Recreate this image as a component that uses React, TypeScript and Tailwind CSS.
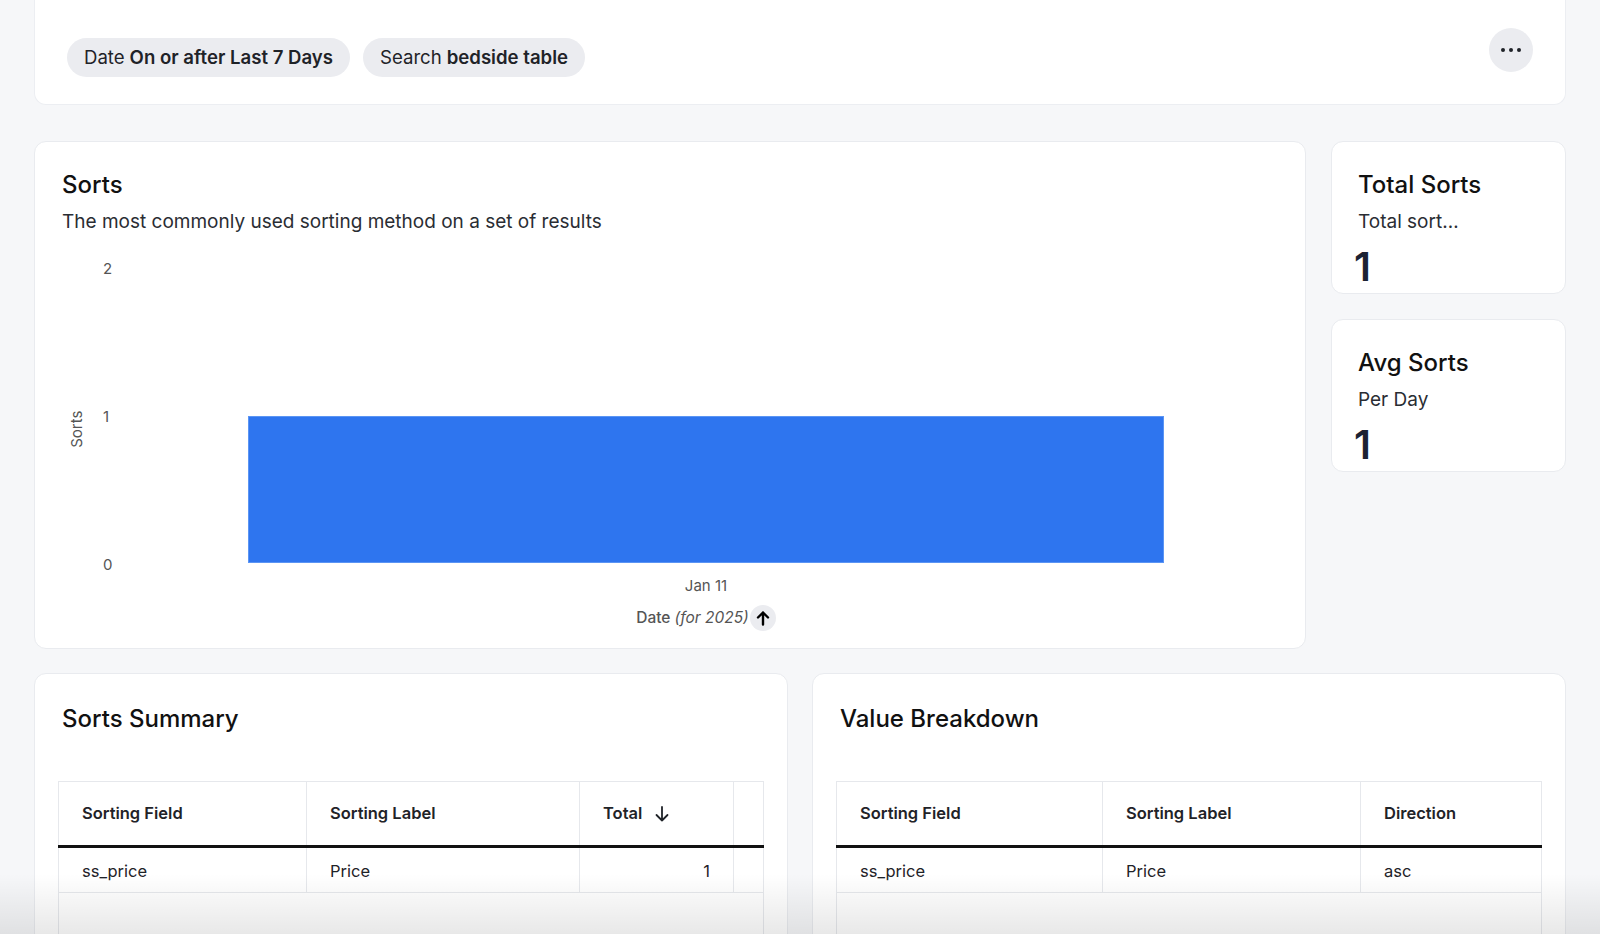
import React from "react";

const font = { fontFamily: "Inter, 'Noto Sans', sans-serif" };

function Chip({ label, value }: { label: string; value: string }) {
  return (
    <div className="flex h-[39px] items-center rounded-full bg-[#ebecf0] px-[17px] text-[18.6px] text-[#1f2328]">
      <span>{label}</span>
      <span className="ml-[5px] font-semibold">{value}</span>
    </div>
  );
}

function StatCard({ title, sub, value }: { title: string; sub: string; value: string }) {
  return (
    <div className="h-[153px] rounded-xl border border-[#e9ebef] bg-white px-[26px] pt-[27px]">
      <div className="text-[24px] font-medium leading-8 text-[#111]">{title}</div>
      <div className="mt-[7px] text-[19px] leading-7 text-[#2a2d33]">{sub}</div>
      <div className="-ml-[4px] mt-[11px] text-[40px] font-semibold leading-[40px] text-[#1b2233]">{value}</div>
    </div>
  );
}

function HeaderCell({ children, w, last }: { children?: React.ReactNode; w: string; last?: boolean }) {
  return (
    <div className={`${w} flex h-full shrink-0 items-center px-[23px] text-[16.5px] font-semibold text-[#1f2328] ${last ? "" : "border-r border-[#e6e8ec]"}`}>
      {children}
    </div>
  );
}

function DataCell({ children, w, right, last }: { children?: React.ReactNode; w: string; right?: boolean; last?: boolean }) {
  return (
    <div className={`${w} flex h-full shrink-0 items-center px-[23px] pt-[3px] text-[16.5px] text-[#1f2328] ${right ? "justify-end" : ""} ${last ? "" : "border-r border-[#e6e8ec]"}`}>
      {children}
    </div>
  );
}

function DownArrow() {
  return (
    <svg width="16" height="18" viewBox="0 0 16 18" fill="none" className="ml-[12px]">
      <path d="M8 2v13.5M2.5 10l5.5 5.5 5.5-5.5" stroke="#1f2328" strokeWidth="1.8" strokeLinecap="round" strokeLinejoin="round" />
    </svg>
  );
}

export default function App() {
  return (
    <div style={font} className="relative h-[934px] w-full overflow-hidden bg-[#f6f7f9] px-[34px]">
      {/* Filter bar */}
      <div className="flex h-[105px] items-start justify-between rounded-b-xl border-x border-b border-[#eceef2] bg-white pl-[32px] pr-[32px] pt-[28px]">
        <div className="mt-[10px] flex gap-[13px]">
          <Chip label="Date" value="On or after Last 7 Days" />
          <Chip label="Search" value="bedside table" />
        </div>
        <div className="flex h-[44px] w-[44px] items-center justify-center rounded-full bg-[#ebecf0]">
          <svg width="22" height="6" viewBox="0 0 22 6">
            <circle cx="3" cy="3" r="2" fill="#1f2328" />
            <circle cx="11" cy="3" r="2" fill="#1f2328" />
            <circle cx="19" cy="3" r="2" fill="#1f2328" />
          </svg>
        </div>
      </div>

      {/* Main row */}
      <div className="mt-[36px] flex gap-[25px]">
        <div className="h-[508px] flex-1 rounded-xl border border-[#e9ebef] bg-white px-[27px] pt-[27px]">
          <div className="text-[24px] font-medium leading-8 text-[#111]">Sorts</div>
          <div className="mt-[7px] text-[19px] leading-7 text-[#2a2d33]">The most commonly used sorting method on a set of results</div>

          <div className="mt-[23px] flex">
            <div className="flex h-[316px] w-[32px] items-center justify-center pt-[24px]">
              <span className="-rotate-90 whitespace-nowrap text-[15px] text-[#555]">Sorts</span>
            </div>
            <div className="flex h-[316px] w-[40px] flex-col justify-between pl-[9px] text-[15px] leading-5 text-[#555]">
              <span>2</span>
              <span>1</span>
              <span>0</span>
            </div>
            <div className="flex-1 pt-[10px]">
              <div className="flex h-[294px] items-end px-[10%]">
                <div className="h-1/2 w-full border border-[#5b95f4] bg-[#2e75ef]" />
              </div>
            </div>
          </div>
          <div className="pl-[72px] pt-[1px]">
            <div className="text-center text-[15px] leading-5 text-[#555]">Jan 11</div>
            <div className="mt-[9px] flex items-center justify-center">
              <span className="text-[15.5px] font-medium text-[#555]">
                Date <span className="font-normal italic">(for 2025)</span>
              </span>
              <span className="ml-[1px] flex h-[26px] w-[26px] items-center justify-center rounded-full bg-[#ebecf0]">
                <svg width="14" height="16" viewBox="0 0 14 16" fill="none">
                  <path d="M7 14.5V2.5M2 7.5l5-5 5 5" stroke="#000" strokeWidth="2.4" strokeLinecap="round" strokeLinejoin="round" />
                </svg>
              </span>
            </div>
          </div>
        </div>

        <div className="flex w-[235px] flex-col gap-[25px]">
          <StatCard title="Total Sorts" sub="Total sort…" value="1" />
          <StatCard title="Avg Sorts" sub="Per Day" value="1" />
        </div>
      </div>

      {/* Bottom cards */}
      <div className="mt-[24px] grid grid-cols-2 gap-[24px]">
        <div className="h-[300px] rounded-t-xl border border-[#e9ebef] bg-white px-[23px] pt-[29px]">
          <div className="px-[4px] text-[24px] font-medium leading-8 text-[#111]">Sorts Summary</div>
          <div className="mt-[46px]">
            <div className="flex h-[64px] border-x border-t border-[#e6e8ec]">
              <HeaderCell w="w-[248px]">Sorting Field</HeaderCell>
              <HeaderCell w="w-[273px]">Sorting Label</HeaderCell>
              <HeaderCell w="w-[154px]">
                Total <DownArrow />
              </HeaderCell>
              <div className="flex-1" />
            </div>
            <div className="h-[3px] bg-[#111]" />
            <div className="flex h-[45px] border-x border-b border-[#e6e8ec]">
              <DataCell w="w-[248px]">ss_price</DataCell>
              <DataCell w="w-[273px]">Price</DataCell>
              <DataCell w="w-[154px]" right>1</DataCell>
              <div className="flex-1" />
            </div>
            <div className="h-[80px] border-x border-[#e6e8ec]" />
          </div>
        </div>

        <div className="h-[300px] rounded-t-xl border border-[#e9ebef] bg-white px-[23px] pt-[29px]">
          <div className="px-[4px] text-[24px] font-medium leading-8 text-[#111]">Value Breakdown</div>
          <div className="mt-[46px]">
            <div className="flex h-[64px] border-x border-t border-[#e6e8ec]">
              <HeaderCell w="w-[266px]">Sorting Field</HeaderCell>
              <HeaderCell w="w-[258px]">Sorting Label</HeaderCell>
              <div className="flex h-full flex-1 items-center px-[23px] text-[16.5px] font-semibold text-[#1f2328]">Direction</div>
            </div>
            <div className="h-[3px] bg-[#111]" />
            <div className="flex h-[45px] border-x border-b border-[#e6e8ec]">
              <DataCell w="w-[266px]">ss_price</DataCell>
              <DataCell w="w-[258px]">Price</DataCell>
              <div className="flex h-full flex-1 items-center px-[23px] pt-[3px] text-[16.5px] text-[#1f2328]">asc</div>
            </div>
            <div className="h-[80px] border-x border-[#e6e8ec]" />
          </div>
        </div>
      </div>

      <div className="pointer-events-none absolute inset-x-0 bottom-0 h-[60px] bg-gradient-to-b from-transparent to-black/[0.09]" />
    </div>
  );
}
